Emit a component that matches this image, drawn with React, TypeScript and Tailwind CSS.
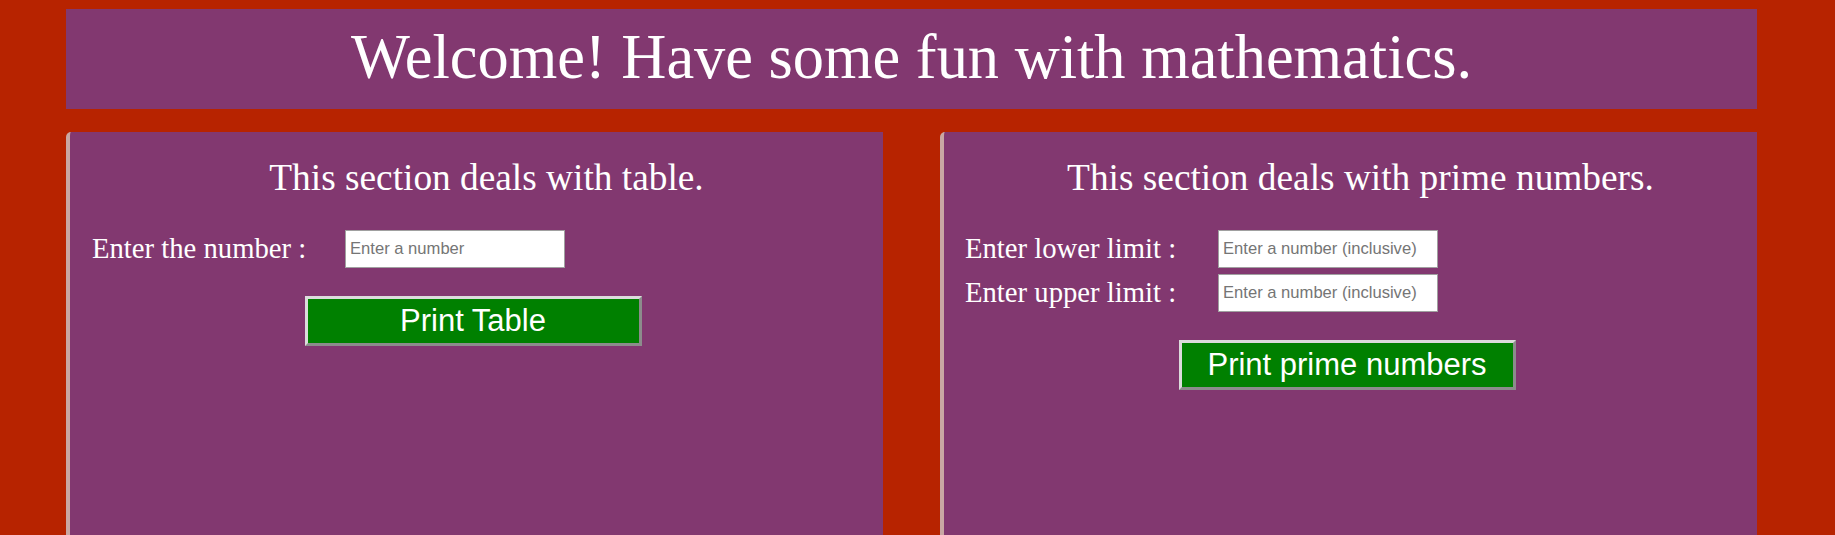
const Row = ({ label, placeholder }: { label: string; placeholder: string }) => (
	<div className="flex h-[38px] items-center">
		<label className="w-[253px] text-[28.7px] leading-[1.15]">{label}</label>
		<input
			type="number"
			placeholder={placeholder}
			className="h-[38px] w-[220px] border border-[#a0a0a0] bg-white pl-[4px] font-['Liberation_Sans',Arial,sans-serif] text-[16.6px] text-black outline-none placeholder:text-[#757575]"
		/>
	</div>
)

const PrintButton = ({ text }: { text: string }) => (
	<div className="flex justify-center pr-[7px]">
		<button className="h-[50px] w-[337px] border-[3px] border-t-[#dcdcdc] border-r-[#8c8c8c] border-b-[#8c8c8c] border-l-[#dcdcdc] bg-[#008000] font-['Liberation_Sans',Arial,sans-serif] text-[31px] leading-none text-white">
			{text}
		</button>
	</div>
)

const Section = ({ heading, children }: { heading: string; children: React.ReactNode }) => (
	<section className="h-[420px] w-[817px] rounded-tl-[5px] border-l-4 border-[#c9a7a3] bg-[#823870] pt-[25px]">
		<h2 className="pl-[20px] text-center text-[37.33px] leading-[1.15]">{heading}</h2>
		{children}
	</section>
)

const App = () => {
	return (
		<div className="h-[535px] overflow-hidden bg-[#b72300] pt-[9px] font-['Liberation_Serif','Times_New_Roman',serif] text-white">
			<div className="ml-[66px] w-[1691px]">
				<header className="h-[100px] bg-[#823870] pt-[12px] text-center text-[62.4px] leading-[1.15]">
					Welcome! Have some fun with mathematics.
				</header>

				<div className="mt-[23px] flex gap-[57px]">
					<Section heading="This section deals with table.">
						<div className="mt-[30px] flex flex-col gap-[6px] pl-[22px]">
							<Row label="Enter the number :" placeholder="Enter a number" />
						</div>
						<div className="mt-[28px]">
							<PrintButton text="Print Table" />
						</div>
					</Section>

					<Section heading="This section deals with prime numbers.">
						<div className="mt-[30px] flex flex-col gap-[6px] pl-[21px]">
							<Row label="Enter lower limit :" placeholder="Enter a number (inclusive)" />
							<Row label="Enter upper limit :" placeholder="Enter a number (inclusive)" />
						</div>
						<div className="mt-[28px]">
							<PrintButton text="Print prime numbers" />
						</div>
					</Section>
				</div>
			</div>
		</div>
	)
}

export default App
